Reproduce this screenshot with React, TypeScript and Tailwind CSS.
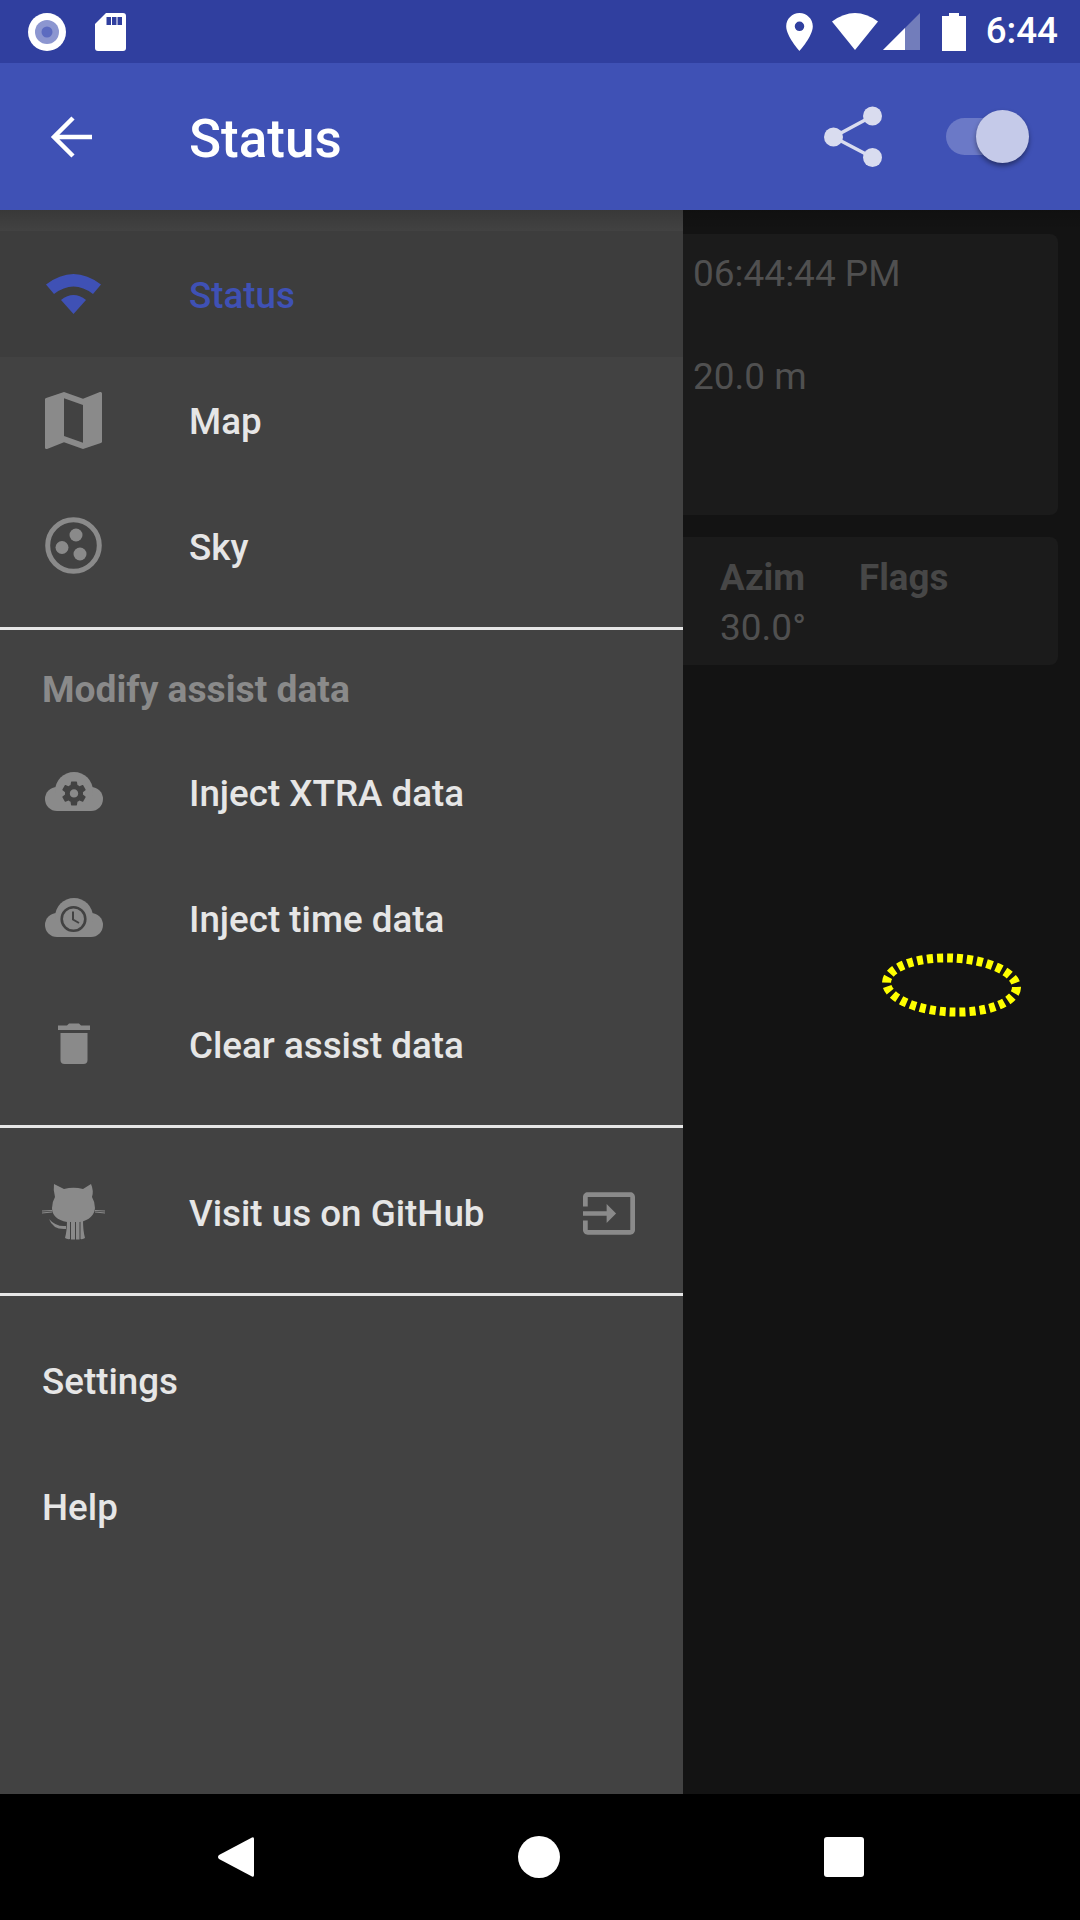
import React from 'react';

const gearPath =
    'M19.43 12.98c.04-.32.07-.64.07-.98s-.03-.66-.07-.98l2.11-1.65c.19-.15.24-.42.12-.64l-2-3.46c-.12-.22-.39-.3-.61-.22l-2.49 1c-.52-.4-1.08-.73-1.69-.98l-.38-2.65C14.46 2.18 14.25 2 14 2h-4c-.25 0-.46.18-.49.42l-.38 2.65c-.61.25-1.17.59-1.69.98l-2.49-1c-.23-.09-.49 0-.61.22l-2 3.46c-.13.22-.07.49.12.64l2.11 1.65c-.04.32-.07.65-.07.98s.03.66.07.98l-2.11 1.65c-.19.15-.24.42-.12.64l2 3.46c.12.22.39.3.61.22l2.49-1c.52.4 1.08.73 1.69.98l.38 2.65c.03.24.24.42.49.42h4c.25 0 .46-.18.49-.42l.38-2.65c.61-.25 1.17-.59 1.69-.98l2.49 1c.23.09.49 0 .61-.22l2-3.46c.12-.22.07-.49-.12-.64l-2.11-1.65zM12 15.5c-1.93 0-3.5-1.57-3.5-3.5s1.57-3.5 3.5-3.5 3.5 1.57 3.5 3.5-1.57 3.5-3.5 3.5z';

function Cloud({ children }: { children?: React.ReactNode }) {
    return (
        <svg className="-translate-y-[2px]" width="58" height="39" viewBox="0 0 58 39">
            <g fill="#8a8a8a">
                <circle cx="12" cy="27" r="12" />
                <circle cx="46" cy="27" r="12" />
                <circle cx="29" cy="19" r="19" />
                <rect x="12" y="20" width="34" height="19" />
            </g>
            {children}
        </svg>
    );
}

const WifiIcon = () => (
    <svg width="57" height="40" viewBox="0 0 57 40">
        <path d="M1 10.5 Q28.5 -10.5 56 10.5 L48 20 Q28.5 5 9 20 Z" fill="#3f51b5" />
        <path d="M16 26 Q28.5 16 41 26 L28.5 40 Z" fill="#3f51b5" />
    </svg>
);

const MapIcon = () => (
    <svg width="57" height="57" viewBox="3 3 18 18">
        <path
            d="M20.5 3l-.16.03L15 5.1 9 3 3.36 4.9c-.21.07-.36.25-.36.48V20.5c0 .28.22.5.5.5l.16-.03L9 18.9l6 2.1 5.64-1.9c.21-.07.36-.25.36-.48V3.5c0-.28-.22-.5-.5-.5zM15 19l-6-2.11V5l6 2.11V19z"
            fill="#8a8a8a"
        />
    </svg>
);

const SkyIcon = () => (
    <svg className="-translate-y-[1px]" width="57" height="57" viewBox="0 0 57 57">
        <circle cx="28.5" cy="28.5" r="25.8" fill="none" stroke="#8a8a8a" strokeWidth="5" />
        <circle cx="31" cy="18" r="6.5" fill="#8a8a8a" />
        <circle cx="17" cy="30.5" r="6.5" fill="#8a8a8a" />
        <circle cx="35" cy="37" r="6.5" fill="#8a8a8a" />
    </svg>
);

const CloudGearIcon = () => (
    <Cloud>
        <g transform="translate(14.6 7) scale(1.2)">
            <path d={gearPath} fill="#424242" />
        </g>
    </Cloud>
);

const CloudClockIcon = () => (
    <Cloud>
        <circle cx="28.5" cy="21" r="11.8" fill="none" stroke="#424242" strokeWidth="2.6" />
        <path d="M28 13.5 V21.5 L34 25" fill="none" stroke="#424242" strokeWidth="2" />
    </Cloud>
);

const TrashIcon = () => (
    <svg className="-translate-y-[2px]" width="32" height="41" viewBox="0 0 32 41">
        <path d="M0 7 V2.5 H9 L11 0.5 H21 L23 2.5 H32 V7 Z" fill="#8a8a8a" />
        <path d="M2.5 10 H29.5 V37 a4 4 0 0 1 -4 4 H6.5 a4 4 0 0 1 -4 -4 Z" fill="#8a8a8a" />
    </svg>
);

const OctocatIcon = () => (
    <svg className="-translate-y-[2px]" width="63" height="57" viewBox="0 0 63 57">
        <g fill="#8a8a8a">
            <path d="M12 1 L22 6 Q31.5 3.5 41 6 L49 1 Q52 8 50 14 Q53 19 53 25 Q52 36 38 39 L25 39 Q10 36 10 25 Q10 19 13 14 Q11 7 12 1 Z" />
            <path d="M25 37 H28 V56 Q25 56.500 23 55 Q25 48 25 37 Z" />
            <path d="M29 37 H33 V56.500 H29 Z" />
            <path d="M34 37 H37.500 V56.500 H34 Z" />
            <path d="M38.500 37 H41 Q41 48 43 55 Q41 56.500 38.500 56 Z" />
            <path d="M7 36 Q14 44 24 43 L24 46 Q11 47 7 36 Z" />
        </g>
        <path d="M0 28 L10 27.500 M0 30 L10 29 M53 27.500 L63 28 M53 29 L63 30" stroke="#8a8a8a" strokeWidth="1" fill="none" />
    </svg>
);

const ExitIcon = () => (
    <svg width="52" height="43" viewBox="1 3 22 18">
        <path
            d="M21 3.01H3c-1.1 0-2 .9-2 2V9h2V4.99h18v14.03H3V15H1v4.01c0 1.1.9 1.98 2 1.98h18c1.1 0 2-.88 2-1.98v-14c0-1.11-.9-2-2-2zM11 16l4-4-4-4v3H1v2h10v3z"
            fill="#8a8a8a"
        />
    </svg>
);

function DrawerRow({
    icon,
    label,
    active,
    low,
    trailing,
}: {
    icon?: React.ReactNode;
    label: string;
    active?: boolean;
    low?: boolean;
    trailing?: React.ReactNode;
}) {
    return (
        <div className={`h-[126px] flex items-center ${active ? 'bg-[#3d3d3d]' : ''}`}>
            {icon ? (
                <div className="w-[147px] ml-[42px] pr-[84px] flex justify-center shrink-0">
                    <div className="w-[63px] flex justify-center shrink-0">{icon}</div>
                </div>
            ) : (
                <div className="w-[42px] shrink-0" />
            )}
            <span
                className={`${low ? 'pt-[3px]' : 'pt-[1px]'} text-[36.75px] font-medium leading-[50px] ${
                    active ? 'text-[#3f51b5]' : 'text-[#e6e6e6]'
                }`}
            >
                {label}
            </span>
            {trailing && <div className="ml-auto pr-[48px] flex">{trailing}</div>}
        </div>
    );
}

function StatusBar() {
    return (
        <div className="h-[63px] bg-[#303f9f] flex items-center justify-between pl-[28px] pr-[22px] shrink-0">
            <div className="flex items-center gap-[29px]">
                <svg width="38" height="38" viewBox="0 0 38 38">
                    <circle cx="19" cy="19" r="19" fill="#fff" />
                    <circle cx="19" cy="19" r="12" fill="#8c96d0" />
                    <circle cx="19" cy="19" r="5.500" fill="#5c6bc0" />
                </svg>
                <svg width="31" height="38" viewBox="0 0 31 38">
                    <path d="M11 0 H28 a3 3 0 0 1 3 3 V35 a3 3 0 0 1 -3 3 H3 a3 3 0 0 1 -3 -3 V11 Z" fill="#fff" />
                    <path d="M11.500 4 h4.500 v8 h-4.500 z M17 4 h4.500 v8 h-4.500 z M22.500 4 h4.500 v8 h-4.500 z" fill="#303f9f" />
                </svg>
            </div>
            <div className="flex items-center">
                <svg width="27" height="38" viewBox="5 2 14 20">
                    <path
                        d="M12 2C8.130 2 5 5.130 5 9c0 5.250 7 13 7 13s7-7.750 7-13c0-3.870-3.130-7-7-7zm0 9.500a2.500 2.500 0 1 1 0-5 2.500 2.500 0 0 1 0 5z"
                        fill="#fff"
                    />
                </svg>
                <svg className="ml-[19px]" width="46" height="37" viewBox="0 0 46 37">
                    <path d="M0 8.500 Q23 -8.500 46 8.500 L23 37 Z" fill="#fff" />
                </svg>
                <svg className="ml-[5px]" width="37" height="37" viewBox="0 0 37 37">
                    <path d="M0 37 L37 0 V37 Z" fill="#727dbb" />
                    <path d="M0 37 L22 15 V37 Z" fill="#fff" />
                </svg>
                <svg className="ml-[22px]" width="24" height="38" viewBox="0 0 24 38">
                    <path d="M7 0 H17 V3 H24 V38 H0 V3 H7 Z" fill="#fff" />
                </svg>
                <span className="ml-[20px] text-[36.75px] font-medium leading-none text-white">6:44</span>
            </div>
        </div>
    );
}

function AppBar() {
    return (
        <div className="h-[147px] bg-[#3f51b5] flex items-center shrink-0 pl-[50px]">
            <svg width="43" height="42" viewBox="0 0 43 42">
                <path d="M42 21 H4 M23 2 L4 21 L23 40" fill="none" stroke="#fff" strokeWidth="4.500" />
            </svg>
            <span className="ml-[96px] pt-[5px] text-[53px] font-medium leading-none text-white">Status</span>
            <svg className="ml-auto" width="58" height="62" viewBox="0 0 58 62">
                <path d="M9.500 31 L48.500 10 M9.500 31 L48.500 51.500" stroke="#d9dcef" strokeWidth="3.500" />
                <circle cx="9.500" cy="31" r="9.500" fill="#d9dcef" />
                <circle cx="48.500" cy="10" r="9.500" fill="#d9dcef" />
                <circle cx="48.500" cy="51.500" r="9.500" fill="#d9dcef" />
            </svg>
            <div className="ml-[64px] mr-[51px] flex items-center">
                <div className="w-[60px] h-[37px] rounded-full bg-[#6b79c7]" />
                <div className="w-[53px] h-[53px] -ml-[30px] rounded-full bg-[#c5cae9] shadow-[0_3px_5px_rgba(0,0,0,0.4)]" />
            </div>
        </div>
    );
}

function Background() {
    return (
        <div className="h-full bg-[#131313] pt-[24px] pl-[22px] pr-[22px] flex flex-col gap-[22px]">
            <div className="h-[281px] rounded-[8px] bg-[#1b1b1b] pl-[671px] pt-[15px] text-[37px] leading-[50px] text-[#505050]">
                <div>06:44:44 PM</div>
                <div className="mt-[53px]">20.0 m</div>
            </div>
            <div className="h-[128px] rounded-[8px] bg-[#1b1b1b] pl-[698px] pt-[16px] flex gap-[53px] text-[37px] leading-[50px] text-[#505050]">
                <div>
                    <div className="text-[36.75px] font-bold text-[#474747]">Azim</div>
                    <div>30.0°</div>
                </div>
                <div className="text-[36.75px] font-bold text-[#474747]">Flags</div>
            </div>
        </div>
    );
}

function Drawer() {
    return (
        <div className="absolute left-0 top-0 bottom-0 w-[683px] bg-[#424242] pt-[21px]">
            <DrawerRow low active icon={<WifiIcon />} label="Status" />
            <DrawerRow low icon={<MapIcon />} label="Map" />
            <DrawerRow low icon={<SkyIcon />} label="Sky" />
            <div className="h-[3px] mt-[18px] bg-[#e6e6e6]" />
            <div className="h-[100px] pl-[42px] pt-[34px] text-[37.200px] font-bold leading-[50px] text-[#8a8a8a]">
                Modify assist data
            </div>
            <DrawerRow icon={<CloudGearIcon />} label="Inject XTRA data" />
            <DrawerRow icon={<CloudClockIcon />} label="Inject time data" />
            <DrawerRow icon={<TrashIcon />} label="Clear assist data" />
            <div className="h-[3px] mt-[17px] mb-[22px] bg-[#e6e6e6]" />
            <DrawerRow icon={<OctocatIcon />} label="Visit us on GitHub" trailing={<ExitIcon />} />
            <div className="h-[3px] mt-[17px] mb-[22px] bg-[#e6e6e6]" />
            <DrawerRow label="Settings" />
            <DrawerRow label="Help" />
        </div>
    );
}

function NavBar() {
    return (
        <div className="h-[126px] bg-black flex items-center justify-center gap-[264px] pl-[1px] shrink-0">
            <svg width="37" height="42" viewBox="0 0 37 42">
                <path d="M35 1.500 L2 19 Q0 21 2 23 L35 40.500 Q37 41.500 37 39 V3 Q37 0.500 35 1.500 Z" fill="#fff" />
            </svg>
            <div className="w-[42px] h-[42px] rounded-full bg-white" />
            <div className="w-[40px] h-[40px] rounded-[3px] bg-white" />
        </div>
    );
}

export default function App() {
    return (
        <div className="w-[1080px] h-[1920px] flex flex-col overflow-hidden font-['Roboto',sans-serif]">
            <StatusBar />
            <AppBar />
            <div className="relative flex-1 min-h-0">
                <Background />
                <Drawer />
                <div className="absolute left-0 right-0 top-0 h-[21px] bg-gradient-to-b from-black/15 to-transparent" />
                <svg className="absolute left-[882px] top-[743px]" width="139" height="64" viewBox="0 0 139 64">
                    <ellipse
                        cx="69.500"
                        cy="32"
                        rx="65"
                        ry="27"
                        transform="rotate(2.500 69.500 32)"
                        fill="none"
                        stroke="#ffff00"
                        strokeWidth="9"
                        strokeDasharray="6 4"
                    />
                </svg>
            </div>
            <NavBar />
        </div>
    );
}
